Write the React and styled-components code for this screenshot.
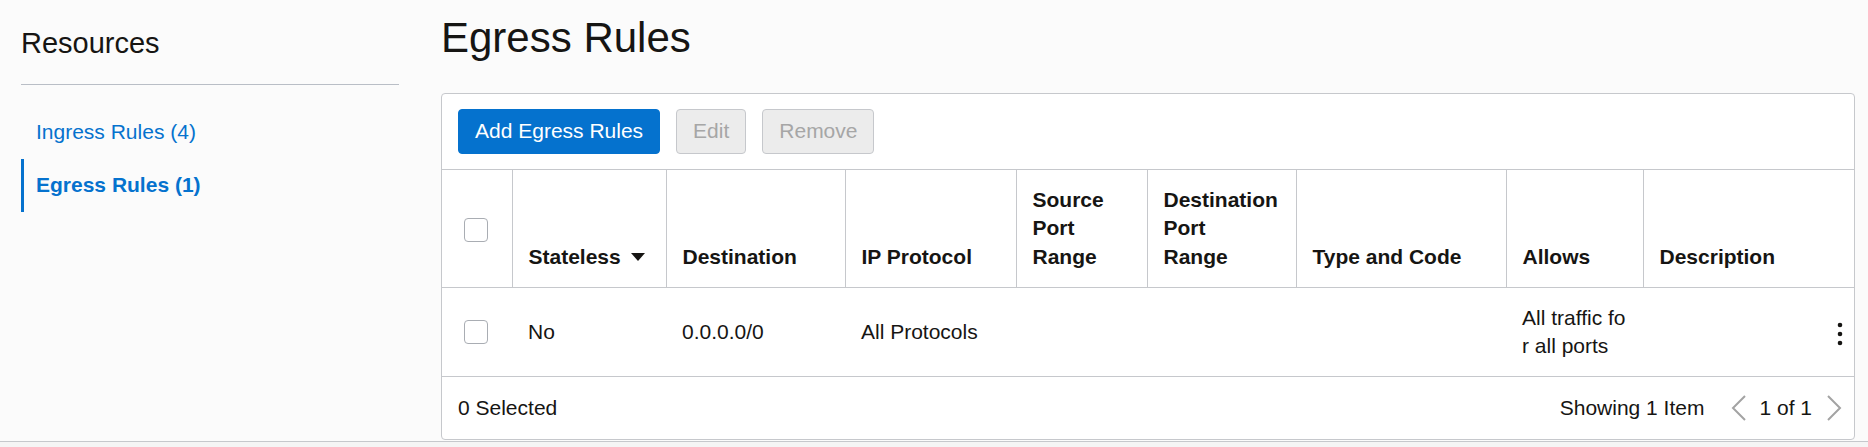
import styled, { createGlobalStyle } from "styled-components";

const GlobalStyle = createGlobalStyle`
  *, *::before, *::after {
    box-sizing: border-box;
  }
  html, body {
    margin: 0;
    padding: 0;
    background: #f5f5f5;
  }
  body {
    font-family: "Liberation Sans", Arial, sans-serif;
    color: #161513;
  }
`;

const Page = styled.div`
  display: flex;
  background: #fbfbfb;
  border-bottom: 1px solid #c6c8cc;
  padding-bottom: 1px;
`;

const Sidebar = styled.aside`
  width: 378px;
  margin-left: 21px;
  margin-right: 42px;
  flex-shrink: 0;
`;

const SideTitle = styled.h2`
  margin: 26px 0 0;
  font-size: 29px;
  font-weight: 400;
  line-height: 1.2;
  padding-bottom: 23px;
  border-bottom: 1px solid #b9bec6;
`;

const NavList = styled.nav`
  display: flex;
  flex-direction: column;
  margin-top: 21px;
`;

const NavItem = styled.a`
  display: block;
  font-size: 21px;
  line-height: 28.5px;
  padding: 12.25px 12px;
  border-left: 3px solid ${p => (p.active ? "#0572ce" : "transparent")};
  color: #0572ce;
  font-weight: ${p => (p.active ? 700 : 400)};
  text-decoration: none;
`;

const Main = styled.main`
  flex: 1;
  margin-right: 13px;
  min-width: 0;
`;

const Title = styled.h1`
  margin: 13px 0 0;
  font-size: 42px;
  font-weight: 400;
  line-height: 1.2;
  padding-bottom: 30px;
`;

const Panel = styled.section`
  background: #fff;
  border: 1px solid #c6c8cc;
  border-radius: 4px;
  overflow: hidden;
`;

const Toolbar = styled.div`
  display: flex;
  gap: 16px;
  padding: 15px 16px;
  border-bottom: 1px solid #c6c8cc;
`;

const Button = styled.button`
  font-family: inherit;
  font-size: 21px;
  line-height: 28.5px;
  padding: 7px 16px;
  border-radius: 4px;
  border: 1px solid ${p => (p.primary ? "#0572ce" : "#c6c8cc")};
  background: ${p => (p.primary ? "#0572ce" : "#ececec")};
  color: ${p => (p.primary ? "#fff" : "#a6a6a6")};
`;

const Table = styled.table`
  width: 100%;
  border-collapse: collapse;
  table-layout: fixed;
`;

const Th = styled.th`
  width: ${p => p.w || "auto"};
  text-align: left;
  vertical-align: bottom;
  font-size: 21px;
  line-height: 28.5px;
  font-weight: 700;
  padding: 16px 26px 16px 16px;
  border-left: 1px solid #c6c8cc;
  &:first-child {
    border-left: none;
    vertical-align: middle;
    padding: 19px 22px 16px;
  }
`;

const HeadRow = styled.tr`
  border-bottom: 1px solid #c6c8cc;
`;

const Td = styled.td`
  font-size: 21px;
  line-height: 28.5px;
  padding: 15.5px 16px;
  vertical-align: middle;
  word-break: ${p => (p.breakAll ? "break-all" : "normal")};
  text-align: ${p => (p.right ? "right" : "left")};
  &:first-child {
    padding: 15.5px 22px;
  }
`;

const Checkbox = styled.span`
  display: block;
  width: 24px;
  height: 24px;
  border: 1px solid #a9adb3;
  border-radius: 4px;
  background: #fff;
`;

const SortLabel = styled.span`
  display: inline-flex;
  align-items: center;
  gap: 10px;
  white-space: nowrap;
`;

const Kebab = styled.span`
  display: inline-flex;
  vertical-align: middle;
  margin-right: -5px;
`;

const Footer = styled.div`
  display: flex;
  align-items: center;
  justify-content: space-between;
  padding: 16.5px 12px 16.5px 16px;
  border-top: 1px solid #c6c8cc;
  font-size: 21px;
  line-height: 28.5px;
`;

const Pager = styled.div`
  display: flex;
  align-items: center;
`;

const PagerCount = styled.span`
  margin-right: 27px;
`;

const PagerPage = styled.span`
  margin: 0 14px 0 12px;
`;

const Chevron = ({ dir }) => (
  <svg width="16" height="28" viewBox="0 0 16 28">
    <polyline
      points={dir === "left" ? "14,2 2,14 14,26" : "2,2 14,14 2,26"}
      fill="none"
      stroke="#a3a3a3"
      strokeWidth="2"
    />
  </svg>
);

const columns = [
  { label: "Stateless", w: "154px", sort: true },
  { label: "Destination", w: "179px" },
  { label: "IP Protocol", w: "171px" },
  { label: "Source Port Range", w: "131px" },
  { label: "Destination Port Range", w: "149px" },
  { label: "Type and Code", w: "210px" },
  { label: "Allows", w: "137px" },
  { label: "Description" },
];

export default function App() {
  return (
    <>
      <GlobalStyle />
      <Page>
        <Sidebar>
          <SideTitle>Resources</SideTitle>
          <NavList>
            <NavItem href="#">Ingress Rules (4)</NavItem>
            <NavItem href="#" active>Egress Rules (1)</NavItem>
          </NavList>
        </Sidebar>
        <Main>
          <Title>Egress Rules</Title>
          <Panel>
            <Toolbar>
              <Button primary>Add Egress Rules</Button>
              <Button disabled>Edit</Button>
              <Button disabled>Remove</Button>
            </Toolbar>
            <Table>
              <thead>
                <HeadRow>
                  <Th w="70px"><Checkbox /></Th>
                  {columns.map(c => (
                    <Th key={c.label} w={c.w}>
                      {c.sort ? (
                        <SortLabel>
                          {c.label}
                          <svg width="14" height="8" viewBox="0 0 14 8">
                            <polygon points="0,0 14,0 7,8" fill="#161513" />
                          </svg>
                        </SortLabel>
                      ) : (
                        c.label
                      )}
                    </Th>
                  ))}
                </HeadRow>
              </thead>
              <tbody>
                <tr>
                  <Td><Checkbox /></Td>
                  <Td>No</Td>
                  <Td>0.0.0.0/0</Td>
                  <Td>All Protocols</Td>
                  <Td></Td>
                  <Td></Td>
                  <Td></Td>
                  <Td breakAll>All traffic for all ports</Td>
                  <Td right>
                    <Kebab>
                      <svg width="6" height="24" viewBox="0 0 6 24">
                        <circle cx="3" cy="3" r="2.3" fill="#161513" />
                        <circle cx="3" cy="12" r="2.3" fill="#161513" />
                        <circle cx="3" cy="21" r="2.3" fill="#161513" />
                      </svg>
                    </Kebab>
                  </Td>
                </tr>
              </tbody>
            </Table>
            <Footer>
              <span>0 Selected</span>
              <Pager>
                <PagerCount>Showing 1 Item</PagerCount>
                <Chevron dir="left" />
                <PagerPage>1 of 1</PagerPage>
                <Chevron dir="right" />
              </Pager>
            </Footer>
          </Panel>
        </Main>
      </Page>
    </>
  );
}
